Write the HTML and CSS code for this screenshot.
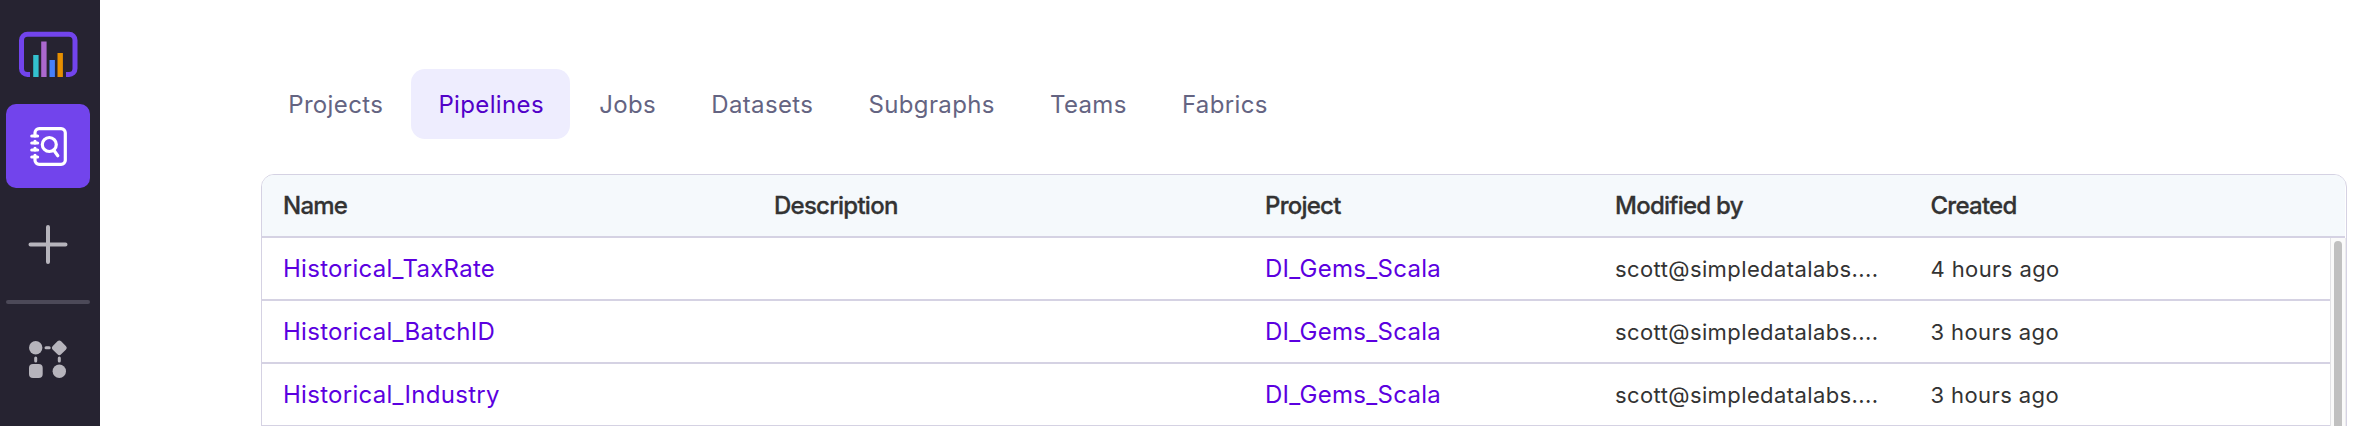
FILE: index.html
```html
<!DOCTYPE html>
<html lang="en">
<head>
<meta charset="utf-8">
<title>Pipelines</title>
<link rel="stylesheet" href="styles.css">
</head>
<body>
<div class="app">
  <aside class="sidebar">
    <svg class="logo" width="60" height="48" viewBox="18 30 60 48">
      <path d="M30 74.500h-2.500a6 6 0 0 1-6-6V40.200a6 6 0 0 1 6-6h41.500a6 6 0 0 1 6 6V68.500a6 6 0 0 1-6 6h-3" fill="none" stroke="#7244ec" stroke-width="5"/>
      <path d="M33.200 55h5.400v22h-5.400z" fill="#33c1cf"/>
      <path d="M41.200 41.500h5.400v35.500h-5.400z" fill="#ab68ce"/>
      <path d="M49.500 60h5.400v17h-5.400z" fill="#4580fb"/>
      <path d="M57.500 53h5.400v24h-5.400z" fill="#e68f00"/>
    </svg>
    <a class="tile">
      <svg width="46" height="48" viewBox="24 122 46 48" fill="none" stroke="#fff" stroke-width="3.200" stroke-linecap="round">
        <path d="M34 133v-.2a4.200 4.200 0 0 1 4.200-4.200h21.900a4.200 4.200 0 0 1 4.200 4.200v27.400a4.200 4.200 0 0 1-4.200 4.200H38.200a4.200 4.200 0 0 1-4.200-4.200v-3.200M34 133v3M34 141.300v1.700M34 148.300v1.700M34 155.300v1.700"/>
        <path d="M30.800 136h5.800M30.800 143h5.800M30.800 150h5.800M30.800 157h5.800"/>
        <circle cx="48.300" cy="144.500" r="7"/>
        <path d="M53 150.500l3.800 5.200"/>
      </svg>
    </a>
    <svg class="plus" width="40" height="40" viewBox="0 0 40 40" stroke="#b6b4bc" stroke-width="4" stroke-linecap="round">
      <path d="M20 3v35M2.500 20.500h35"/>
    </svg>
    <div class="divider"></div>
    <svg class="nodes" width="40" height="40" viewBox="28 340 40 40" fill="#b6b4bc">
      <circle cx="35.700" cy="347.800" r="6.700"/>
      <rect x="53.400" y="341.900" width="11.800" height="11.800" rx="2.600" transform="rotate(45 59.300 347.800)"/>
      <rect x="29" y="364" width="13.700" height="14" rx="4"/>
      <circle cx="59.300" cy="371.300" r="6.700"/>
      <path d="M46 347.800h3.200M35.700 358v3M59.300 358v3" stroke="#b6b4bc" stroke-width="3" stroke-linecap="round"/>
    </svg>
  </aside>
  <main class="main">
    <nav class="tabs">
      <a class="tab">Projects</a>
      <a class="tab active">Pipelines</a>
      <a class="tab">Jobs</a>
      <a class="tab">Datasets</a>
      <a class="tab">Subgraphs</a>
      <a class="tab">Teams</a>
      <a class="tab">Fabrics</a>
    </nav>
    <section class="table">
      <div class="row head">
        <span>Name</span><span>Description</span><span>Project</span><span>Modified by</span><span>Created</span>
      </div>
      <div class="body">
        <div class="rows">
          <div class="row"><a>Historical_TaxRate</a><span></span><a>DI_Gems_Scala</a><span>scott@simpledatalabs....</span><span>4 hours ago</span></div>
          <div class="row"><a>Historical_BatchID</a><span></span><a>DI_Gems_Scala</a><span>scott@simpledatalabs....</span><span>3 hours ago</span></div>
          <div class="row"><a>Historical_Industry</a><span></span><a>DI_Gems_Scala</a><span>scott@simpledatalabs....</span><span>3 hours ago</span></div>
        </div>
        <div class="track"><div class="thumb"></div></div>
      </div>
    </section>
  </main>
</div>
</body>
</html>
```
FILE: styles.css
```css
* { box-sizing: border-box; }
body {
  margin: 0;
  background: #fff;
  font-family: Inter, sans-serif;
  overflow: hidden;
}
.app { display: flex; height: 426px; overflow: hidden; }
.sidebar {
  width: 100px;
  flex: none;
  padding: 30px 10px 0 6px;
  background: #262331;
  display: flex;
  flex-direction: column;
  align-items: center;
}
.sidebar svg { display: block; flex: none; }
.tile {
  width: 84px;
  height: 84px;
  flex: none;
  margin-top: 26px;
  border-radius: 10px;
  background: #7244ec;
  display: flex;
  align-items: center;
  justify-content: center;
}
.plus { margin-top: 36px; }
.divider {
  width: 84px;
  height: 4px;
  flex: none;
  margin-top: 36px;
  border-radius: 2px;
  background: #4c4958;
}
.nodes { margin-top: 36px; }
.main {
  flex: 1;
  min-width: 0;
  padding: 69px 20px 0 161px;
}
.tabs { display: flex; gap: 1.8px; height: 70px; }
.tab {
  display: flex;
  align-items: center;
  padding: 0 26.2px 0 27.2px;
  border-radius: 14px;
  color: #646482;
  font-size: 24px;
  letter-spacing: 0.36px;
}
.tab.active { background: #eeedfe; color: #5200c9; }
.table {
  margin-top: 35px;
  height: 270px;
  border: 1px solid #d5d2e3;
  border-radius: 13px 13px 0 0;
  overflow: hidden;
}
.row {
  display: grid;
  grid-template-columns: 491px 491px 350px 315.5px 1fr;
  align-items: center;
  height: 63px;
  padding-left: 21px;
  border-bottom: 2px solid #d5d2e3;
  color: #333;
  font-size: 22px;
  letter-spacing: 0.4px;
}
.row a { color: #5b00e0; font-size: 24px; letter-spacing: 0.28px; }
.head {
  margin-right: 1px;
  background: #f5f9fc;
  font-size: 24px;
  font-weight: 500;
  letter-spacing: -0.75px;
  -webkit-text-stroke: 0.3px #333;
}
.body { display: flex; }
.rows { flex: 1; }
.track {
  width: 16px;
  height: 190px;
  padding: 3px 3px 0;
  border-left: 1px solid #e3e3e6;
  border-right: 1px solid #ececee;
  background: #fafafa;
}
.thumb {
  width: 8px;
  height: 240px;
  border-radius: 4px;
  background: #c0c0c0;
}
```
